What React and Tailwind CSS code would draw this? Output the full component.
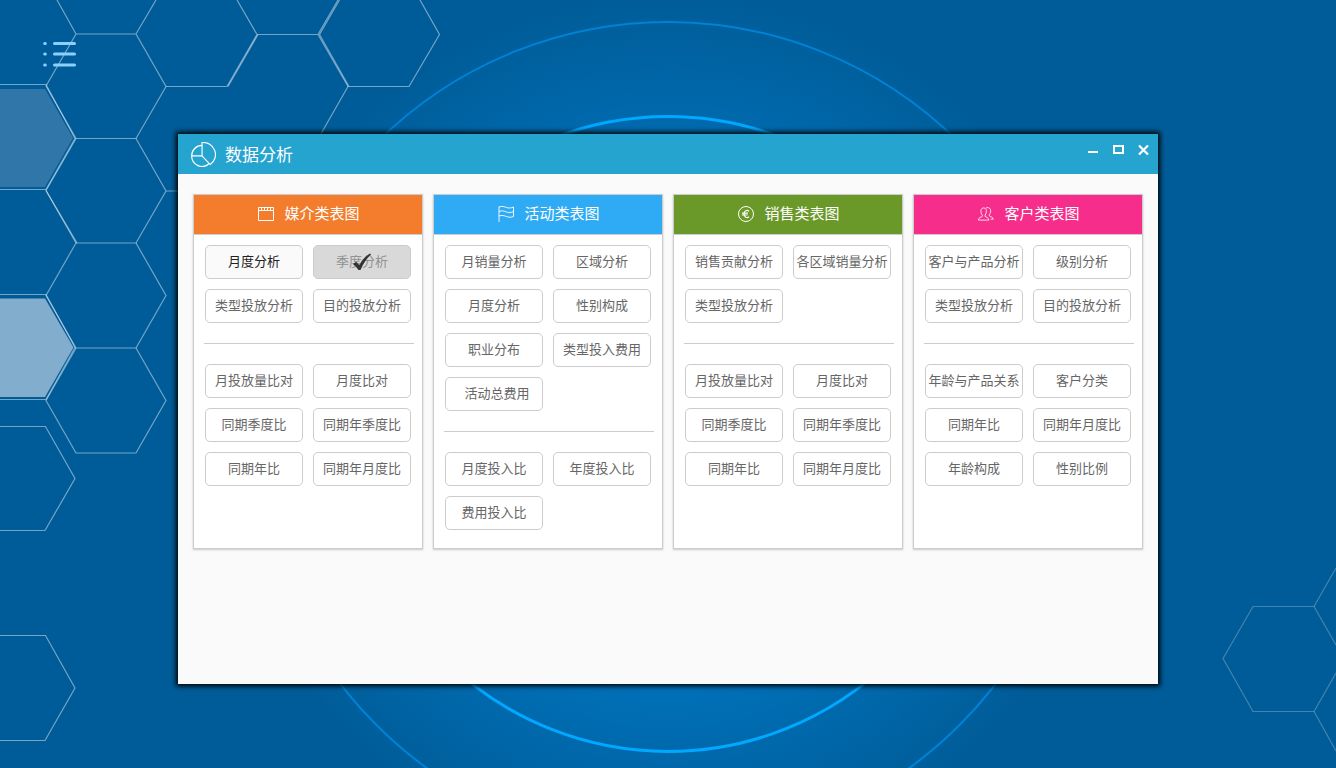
import React, { useState } from 'react';

const panels = [
  {
    id: 'media',
    title: '媒介类表图',
    color: 'bg-[#f47d2d]',
    Icon: FilmIcon,
    top: ['月度分析', '季度分析', '类型投放分析', '目的投放分析'],
    bottom: ['月投放量比对', '月度比对', '同期季度比', '同期年季度比', '同期年比', '同期年月度比'],
  },
  {
    id: 'activity',
    title: '活动类表图',
    color: 'bg-[#2eabf4]',
    Icon: FlagIcon,
    top: ['月销量分析', '区域分析', '月度分析', '性别构成', '职业分布', '类型投入费用', '\u00a0\u00a0活动总费用'],
    bottom: ['月度投入比', '年度投入比', '费用投入比'],
  },
  {
    id: 'sales',
    title: '销售类表图',
    color: 'bg-[#6a9929]',
    Icon: EuroIcon,
    top: ['销售贡献分析', '各区域销量分析', '类型投放分析'],
    bottom: ['月投放量比对', '月度比对', '同期季度比', '同期年季度比', '同期年比', '同期年月度比'],
  },
  {
    id: 'customer',
    title: '客户类表图',
    color: 'bg-[#f62d8b]',
    Icon: UsersIcon,
    top: ['客户与产品分析', '级别分析', '类型投放分析', '目的投放分析'],
    bottom: ['年龄与产品关系', '客户分类', '同期年比', '同期年月度比', '年龄构成', '性别比例'],
  },
];

function FilmIcon() {
  return (
    <svg width="16" height="16" viewBox="0 0 16 16" fill="none" stroke="currentColor" aria-hidden="true">
      <path d="M0.5 1.5h15v13h-15zM0.5 4.5h15M3.5 1.5v3M6.5 1.5v3M9.5 1.5v3M12.5 1.5v3" />
    </svg>
  );
}

function FlagIcon() {
  return (
    <svg width="16" height="16" viewBox="0 0 16 16" fill="none" stroke="currentColor" strokeWidth="0.9" aria-hidden="true">
      <path d="M1 0.5V16" />
      <path d="M1 1C4 -0.2 6 0.6 8.5 1.5S13 2 15.5 1V10.5C13 11.6 11 11.4 8.5 10.5S4 9 1 10" />
      <path d="M1 5.5C4 4.3 6 5 8.5 6S13 6.5 15.5 5.5" />
    </svg>
  );
}

function EuroIcon() {
  return (
    <svg width="16" height="16" viewBox="0 0 16 16" fill="none" stroke="currentColor" aria-hidden="true">
      <circle cx="8" cy="8" r="7.5" />
      <path d="M11 5.2C10 4.3 8.8 4.1 7.7 4.7 5.5 5.8 5.5 10.2 7.7 11.3 8.8 11.9 10 11.7 11 10.8M4 7.2h6M4 9h5.5" strokeWidth="1.2" />
    </svg>
  );
}

function UsersIcon() {
  return (
    <svg width="16" height="16" viewBox="0 0 17 16" fill="none" stroke="currentColor" strokeWidth="0.9" aria-hidden="true">
      <path d="M4.6 9.3C3 7.5 2.8 4.5 3.5 3 4.5 1 7.5 1 8.5 3 9.2 4.5 9 7.500 7.500 9.3V10.5C8.5 11.5 11.5 11.5 11.5 14.5H0.5C0.5 11.5 3.5 11.5 4.6 10.5Z" />
      <path d="M8.5 1.6C10 0.7 12.5 1.2 13.2 3 13.8 5 13.3 7.3 12 8.8V10C13 11 16 11 16.2 13.5H13.5" />
    </svg>
  );
}

function PieIcon() {
  return (
    <svg width="25" height="25" viewBox="0 0 26 26" fill="none" stroke="currentColor" strokeWidth="1.2" aria-hidden="true">
      <path d="M11.5 0.6V14.5L20 23.5A12.6 12.6 0 0 0 11.5 0.6Z" />
      <path d="M11.5 3.5A10.8 10.8 0 0 0 0.7 14.5H11.5M0.7 14.5A10.8 10.8 0 0 0 19 22.4" />
    </svg>
  );
}

function CheckMark() {
  return (
    <svg className="absolute inset-0 m-auto" width="18" height="18" viewBox="0 0 18 18" fill="#333" aria-hidden="true">
      <path d="M0 11L3.2 8.8 6.200 12.2C9 7 12.500 3 17 0.5L18 1.6C13.5 5.5 10.5 10.5 7.500 17H5.5C4 14.8 2 12.8 0 11Z" />
    </svg>
  );
}

function Background() {
  return (
    <svg
      className="absolute inset-0 -z-10 h-full w-full"
      viewBox="0 0 1336 768"
      preserveAspectRatio="xMidYMid slice"
      fill="none"
      aria-hidden="true"
    >
      <defs>
        <radialGradient id="glow" gradientUnits="userSpaceOnUse" cx="668" cy="434" r="440">
          <stop offset="0" stopColor="#0084d4" />
          <stop offset="0.58" stopColor="#0070b7" />
          <stop offset="1" stopColor="#005c98" />
        </radialGradient>
      </defs>
      <rect width="1336" height="768" fill="url(#glow)" />
      <circle cx="668" cy="434" r="412" stroke="#0082d6" strokeWidth="2" />
      <circle cx="668" cy="434" r="317.5" stroke="#00a8ff" strokeWidth="3" />
      <path d="M0 89H45L73 138L45 187H0Z" fill="#3076a8" />
      <path d="M0 298.5H45L73.5 347.5L45 397H0Z" fill="#82adcd" />
      <g stroke="#fff" strokeOpacity="0.45" strokeWidth="1.2">
        <path d="M57 0L76 34H136L156 0M136 34L166 86.5L136 138.5H76L46 86L76 34" />
        <path d="M166 86.5H227L257 34.5L237 0M257 34.5H318L338 0M318 34.5L348 86.5H409L439.5 34.5L420 0" />
        <path d="M348 86.5L318 139M339.5 0L319.5 34.5L349 86.5M228 86.5L258 34.5" />
        <path d="M76 138.5L46 190.5L76 243H136L166 191L136 138.5M166 191H227" />
        <path d="M76 243L46 295.5L76 348H136L166 295.5L136 243" />
        <path d="M76 348L46 400.5L76 453H136L166 400.5L136 348" />
        <path d="M0 84.5H46L75 138.5L46 189.5H0M46 190.5L77 243" />
        <path d="M0 294.5H46L75 347.5L46 399.5H0" />
        <path d="M0 426.5H45.5L75 478.5L45 530.5H0" />
        <path d="M0 635.5H45.5L75 688L45 740.5H0" />
      </g>
      <g stroke="#fff" strokeOpacity="0.25" strokeWidth="1.2">
        <path d="M1336 645L1314 606.5H1253L1223 658.5L1253 711.5H1314L1336 673" />
        <path d="M1314 606.5L1336 568M1314 711.5L1336 751" />
      </g>
    </svg>
  );
}

function OptionGrid({ items, panelId, checked, onToggle }) {
  return (
    <div className="mr-0.5 grid grid-cols-2 gap-2.5 px-px">
      {items.map((label) => {
        const key = `${panelId}-${label}`;
        const isChecked = checked === key;
        let tone = 'bg-white text-[#666]';
        if (isChecked) {
          tone = 'bg-[#d9d9d9] text-[#919191]';
        } else if (key === 'media-月度分析') {
          tone = 'bg-[#fafafa] text-[#222]';
        }

        return (
          <button
            key={key}
            type="button"
            aria-pressed={isChecked}
            onClick={() => onToggle(isChecked ? null : key)}
            className={`relative h-[34px] cursor-pointer whitespace-nowrap rounded-[5px] border border-[#ccc] pb-0.5 text-[13px] leading-5 ${tone}`}
          >
            {label}
            {isChecked && <CheckMark />}
          </button>
        );
      })}
    </div>
  );
}

function Panel({ panel, checked, onToggle }) {
  const { id, title, color, Icon, top, bottom } = panel;

  return (
    <section className="border border-[#ccc] bg-white shadow-[0_1px_2px_rgba(0,0,0,0.2)]">
      <h2 className={`flex h-10 items-center justify-center gap-2.5 border-b border-[#ccc] pb-0.5 pl-0.5 text-[15px] text-white ${color}`}>
        <Icon />
        {title}
      </h2>
      <div className="pt-2.5 pr-2 pb-[18px] pl-2.5">
        <OptionGrid items={top} panelId={id} checked={checked} onToggle={onToggle} />
        <hr className="my-5 border-[#ccc]" />
        <OptionGrid items={bottom} panelId={id} checked={checked} onToggle={onToggle} />
      </div>
    </section>
  );
}

function WindowControls() {
  return (
    <div className="flex gap-3.5 pt-2.5 pr-[9px]">
      <button type="button" aria-label="最小化" className="h-3 cursor-pointer">
        <svg width="11" height="12" viewBox="0 0 11 12" fill="none" stroke="#fff" strokeWidth="2">
          <path d="M0 8H10" />
        </svg>
      </button>
      <button type="button" aria-label="最大化" className="h-3 cursor-pointer">
        <svg width="11" height="12" viewBox="0 0 11 12" fill="none" stroke="#fff" strokeWidth="2">
          <path d="M1 2H10V9H1Z" />
        </svg>
      </button>
      <button type="button" aria-label="关闭" className="h-3 cursor-pointer">
        <svg width="11" height="12" viewBox="0 0 11 12" fill="none" stroke="#fff" strokeWidth="2.2">
          <path d="M1 1.5L10 10.5M10 1.5L1 10.5" />
        </svg>
      </button>
    </div>
  );
}

export default function App() {
  const [checked, setChecked] = useState('media-季度分析');

  return (
    <main className="relative isolate min-h-screen overflow-hidden bg-[#005c98] pb-[84px] font-['Noto_Sans_CJK_SC','Noto_Sans',sans-serif]">
      <Background />

      <nav className="flex pt-[41px] pl-[43px]">
        <button type="button" aria-label="菜单" className="h-[27px] cursor-pointer text-[#8ad0ff]">
          <svg width="33" height="27" viewBox="0 0 33 27" fill="none" stroke="currentColor" strokeWidth="3" strokeLinecap="round">
            <path d="M11.5 2.5H31.5M11.5 13H31.5M11.5 24H31.5" />
            <path d="M1.7 2.5H2.3M1.7 13H2.3M1.7 24H2.3" />
          </svg>
        </button>
      </nav>

      <div className="mx-auto mt-[66px] min-h-[550px] w-full max-w-[980px] bg-[#fafafa] shadow-[0_0_5px_2px_#000]">
        <header className="flex h-10 justify-between bg-[#26a4d0] text-white">
          <div className="flex items-center gap-[9px] pl-[13px]">
            <PieIcon />
            <h1 className="text-[17px]">数据分析</h1>
          </div>
          <WindowControls />
        </header>

        <div className="grid grid-cols-2 gap-2.5 px-[15px] py-5 md:grid-cols-4">
          {panels.map((panel) => (
            <Panel key={panel.id} panel={panel} checked={checked} onToggle={setChecked} />
          ))}
        </div>
      </div>
    </main>
  );
}
